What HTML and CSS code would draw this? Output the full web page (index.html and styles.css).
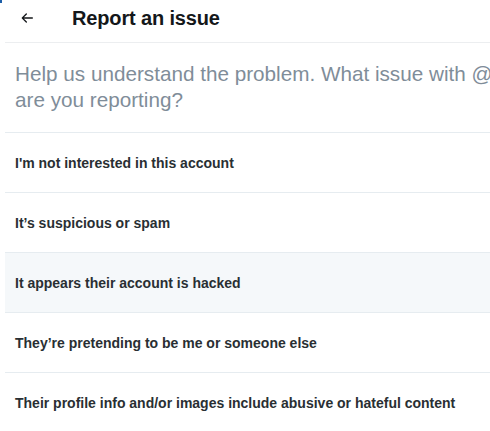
FILE: index.html
```html
<!DOCTYPE html>
<html>
<head>
<meta charset="utf-8">
<link rel="stylesheet" href="styles.css">
</head>
<body>
<div class="corner"></div>
<div class="page">
  <header class="header">
    <button class="back" aria-label="Back">
      <svg width="16" height="16" viewBox="0 0 24 24"><path d="M20 11H7.414l4.293-4.293a1 1 0 0 0-1.414-1.414l-6 6a1 1 0 0 0 0 1.414l6 6a.996.996 0 0 0 1.414 0 1 1 0 0 0 0-1.414L7.414 13H20a1 1 0 1 0 0-2z" fill="#14171a"/></svg>
    </button>
    <h1 class="title">Report an issue</h1>
  </header>
  <div class="question">Help us understand the problem. What issue with @elonmusk are you reporting?</div>
  <ul class="options">
    <li class="option">I'm not interested in this account</li>
    <li class="option">It’s suspicious or spam</li>
    <li class="option hover">It appears their account is hacked</li>
    <li class="option">They’re pretending to be me or someone else</li>
    <li class="option">Their profile info and/or images include abusive or hateful content</li>
  </ul>
</div>
</body>
</html>
```
FILE: styles.css
```css
html, body {
  margin: 0;
  padding: 0;
  background: #fff;
  overflow: hidden;
  width: 490px;
  height: 431px;
}
body {
  font-family: "Liberation Sans", Arial, sans-serif;
  color: #14171a;
}
.corner {
  position: absolute;
  left: 0;
  top: 0;
  width: 2px;
  height: 3px;
  background: #1d5fa8;
}
.page {
  margin-left: 5px;
  width: 485px;
  overflow: hidden;
}
.header {
  display: flex;
  align-items: center;
  height: 43px;
  padding-bottom: 6px;
  margin-left: -2px;
  padding-left: 2px;
  border-bottom: 1px solid #eceef0;
  box-sizing: border-box;
}
.back {
  border: 0;
  background: none;
  padding: 0;
  margin-left: 14px;
  width: 16px;
  height: 16px;
  display: flex;
}
.title {
  margin: 0 0 0 37px;
  font-size: 20px;
  font-weight: bold;
  line-height: 24px;
  letter-spacing: -0.15px;
}
.question {
  padding: 18px 0 0 10px;
  box-sizing: border-box;
  height: 90px;
  font-size: 20.7px;
  line-height: 26px;
  color: #7f8d99;
  width: 600px;
  border-bottom: 1px solid #e6ecf0;
}
.options {
  list-style: none;
  margin: 0;
  padding: 0;
}
.option {
  height: 60px;
  box-sizing: border-box;
  border-bottom: 1px solid #e6ecf0;
  display: flex;
  align-items: center;
  padding: 0 0 0 10px;
  font-size: 14px;
  font-weight: bold;
  color: #292f33;
}
.option.hover {
  background: #f5f8fa;
}
```
